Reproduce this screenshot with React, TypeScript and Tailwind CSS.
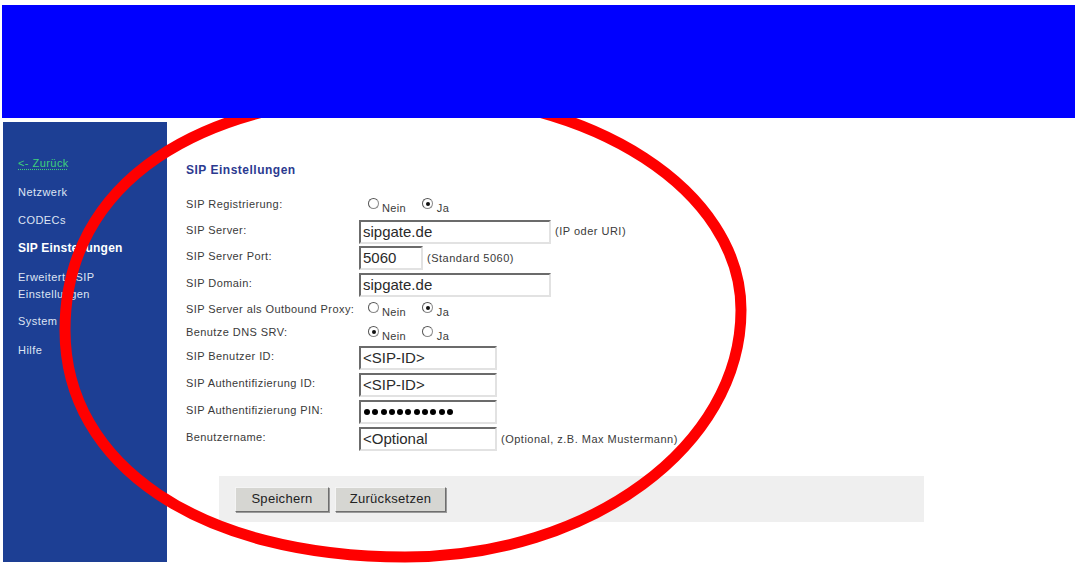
import React from "react";

const Radio = ({ checked }: { checked?: boolean }) => (
  <span className="relative inline-block h-[11px] w-[11px] rounded-full border border-[#8a8a8a] border-t-[#555] border-l-[#555] bg-white">
    {checked && (
      <span className="absolute left-[3px] top-[3px] h-[4px] w-[4px] rounded-full bg-[#111]" />
    )}
  </span>
);

const RadioPair = ({ first }: { first: boolean }) => (
  <div className="flex items-start pl-[9px] text-[11px] leading-[13px] tracking-[0.3px] text-[#3a3a3a]">
    <Radio checked={first} />
    <span className="ml-[3px] mt-[4px]">Nein</span>
    <span className="ml-[16px]">
      <Radio checked={!first} />
    </span>
    <span className="ml-[4px] mt-[4px]">Ja</span>
  </div>
);

const TextBox = ({ w, children }: { w: string; children: React.ReactNode }) => (
  <div
    className={`${w} flex h-[24px] items-center border-2 border-t-[#6b6b6b] border-l-[#6b6b6b] border-r-[#e2e2e2] border-b-[#e2e2e2] bg-white pl-[2px] text-[15px] leading-[18px] text-[#2a2a2a]`}
  >
    {children}
  </div>
);

const Hint = ({ children }: { children: React.ReactNode }) => (
  <span className="ml-[4px] text-[11px] tracking-[0.5px] text-[#3a3a3a]">{children}</span>
);

const Row = ({ h, label, children }: { h: string; label: string; children?: React.ReactNode }) => (
  <div className={`flex ${h} items-center`}>
    <div className="w-[173px] -mt-[3px] text-[11px] leading-[13px] tracking-[0.42px] text-[#3a3a3a]">
      {label}
    </div>
    <div className="flex items-center">{children}</div>
  </div>
);

const Dots = () => (
  <div className="flex gap-[2.3px] pl-[1px]">
    {Array.from({ length: 11 }).map((_, i) => (
      <span key={i} className="h-[6px] w-[6px] rounded-full bg-black" />
    ))}
  </div>
);

const Btn = ({ w, children }: { w: string; children: React.ReactNode }) => (
  <div
    className={`${w} flex h-[25px] items-center justify-center border border-t-[#f4f4f4] border-l-[#f4f4f4] border-r-[#6e6e6e] border-b-[#6e6e6e] bg-[#d6d6d2] text-[13px] tracking-[0.3px] text-[#222] shadow-[1px_1px_0_#9a9a9a]`}
  >
    {children}
  </div>
);

export default function App() {
  return (
    <div
      className="relative h-[567px] w-[1078px] overflow-hidden bg-white"
      style={{ fontFamily: '"Liberation Sans", Arial, sans-serif' }}
    >
      <div className="relative z-20 ml-[2px] mr-[3px] mt-[5px] h-[113px] bg-[#0000ff]" />
      <div className="mt-[4px] flex">
        <div className="ml-[3px] h-[440px] w-[164px] bg-[#1d3f94] pl-[15px] pt-[35px] text-[11px] leading-[13px] tracking-[0.45px] text-[#dfe5f3]">
          <div className="h-[29px]">
            <span className="text-[#3fd07a] underline decoration-dotted underline-offset-2">&lt;- Zurück</span>
          </div>
          <div className="h-[28px]">Netzwerk</div>
          <div className="h-[28px]">CODECs</div>
          <div className="h-[27px] text-[12px] font-bold tracking-[0.2px] text-white">SIP Einstellungen</div>
          <div className="h-[46px] leading-[17px]">
            Erweiterte SIP
            <br />
            Einstellungen
          </div>
          <div className="h-[29px]">System</div>
          <div className="h-[28px]">Hilfe</div>
        </div>
        <div className="pl-[19px] pt-[41px]">
          <div className="h-[14px] text-[12px] font-bold leading-[14px] tracking-[0.5px] text-[#2b3a90]">
            SIP Einstellungen
          </div>
          <div className="mt-[17px]">
            <Row h="h-[24px]" label="SIP Registrierung:">
              <RadioPair first={false} />
            </Row>
            <Row h="h-[27px]" label="SIP Server:">
              <TextBox w="w-[192px]">sipgate.de</TextBox>
              <Hint>(IP oder URI)</Hint>
            </Row>
            <Row h="h-[26px]" label="SIP Server Port:">
              <TextBox w="w-[64px]">5060</TextBox>
              <Hint>(Standard 5060)</Hint>
            </Row>
            <Row h="h-[27px]" label="SIP Domain:">
              <TextBox w="w-[192px]">sipgate.de</TextBox>
            </Row>
            <Row h="h-[25px]" label="SIP Server als Outbound Proxy:">
              <RadioPair first={false} />
            </Row>
            <Row h="h-[22px]" label="Benutze DNS SRV:">
              <RadioPair first={true} />
            </Row>
            <Row h="h-[26px]" label="SIP Benutzer ID:">
              <TextBox w="w-[138px]">&lt;SIP-ID&gt;</TextBox>
            </Row>
            <Row h="h-[28px]" label="SIP Authentifizierung ID:">
              <TextBox w="w-[138px]">&lt;SIP-ID&gt;</TextBox>
            </Row>
            <Row h="h-[26px]" label="SIP Authentifizierung PIN:">
              <TextBox w="w-[138px]">
                <Dots />
              </TextBox>
            </Row>
            <Row h="h-[28px]" label="Benutzername:">
              <TextBox w="w-[138px]">&lt;Optional</TextBox>
              <Hint>(Optional, z.B. Max Mustermann)</Hint>
            </Row>
          </div>
          <div className="ml-[33px] mt-[23px] flex h-[46px] w-[705px] items-center gap-[6px] bg-[#efefef] pl-[16px]">
            <Btn w="w-[94px]">Speichern</Btn>
            <Btn w="w-[111px]">Zurücksetzen</Btn>
          </div>
        </div>
      </div>
      <svg
        className="pointer-events-none absolute left-0 top-0 z-10"
        width="1078"
        height="567"
        viewBox="0 0 1078 567"
      >
        <path
          d="M65,330 C65,184 196,95 410,95 C593,95 741,191 741,310 C741,446 590,557 405,557 C201,557 65,466 65,330 Z"
          fill="none"
          stroke="#ff0000"
          strokeWidth="11"
        />
      </svg>
    </div>
  );
}
